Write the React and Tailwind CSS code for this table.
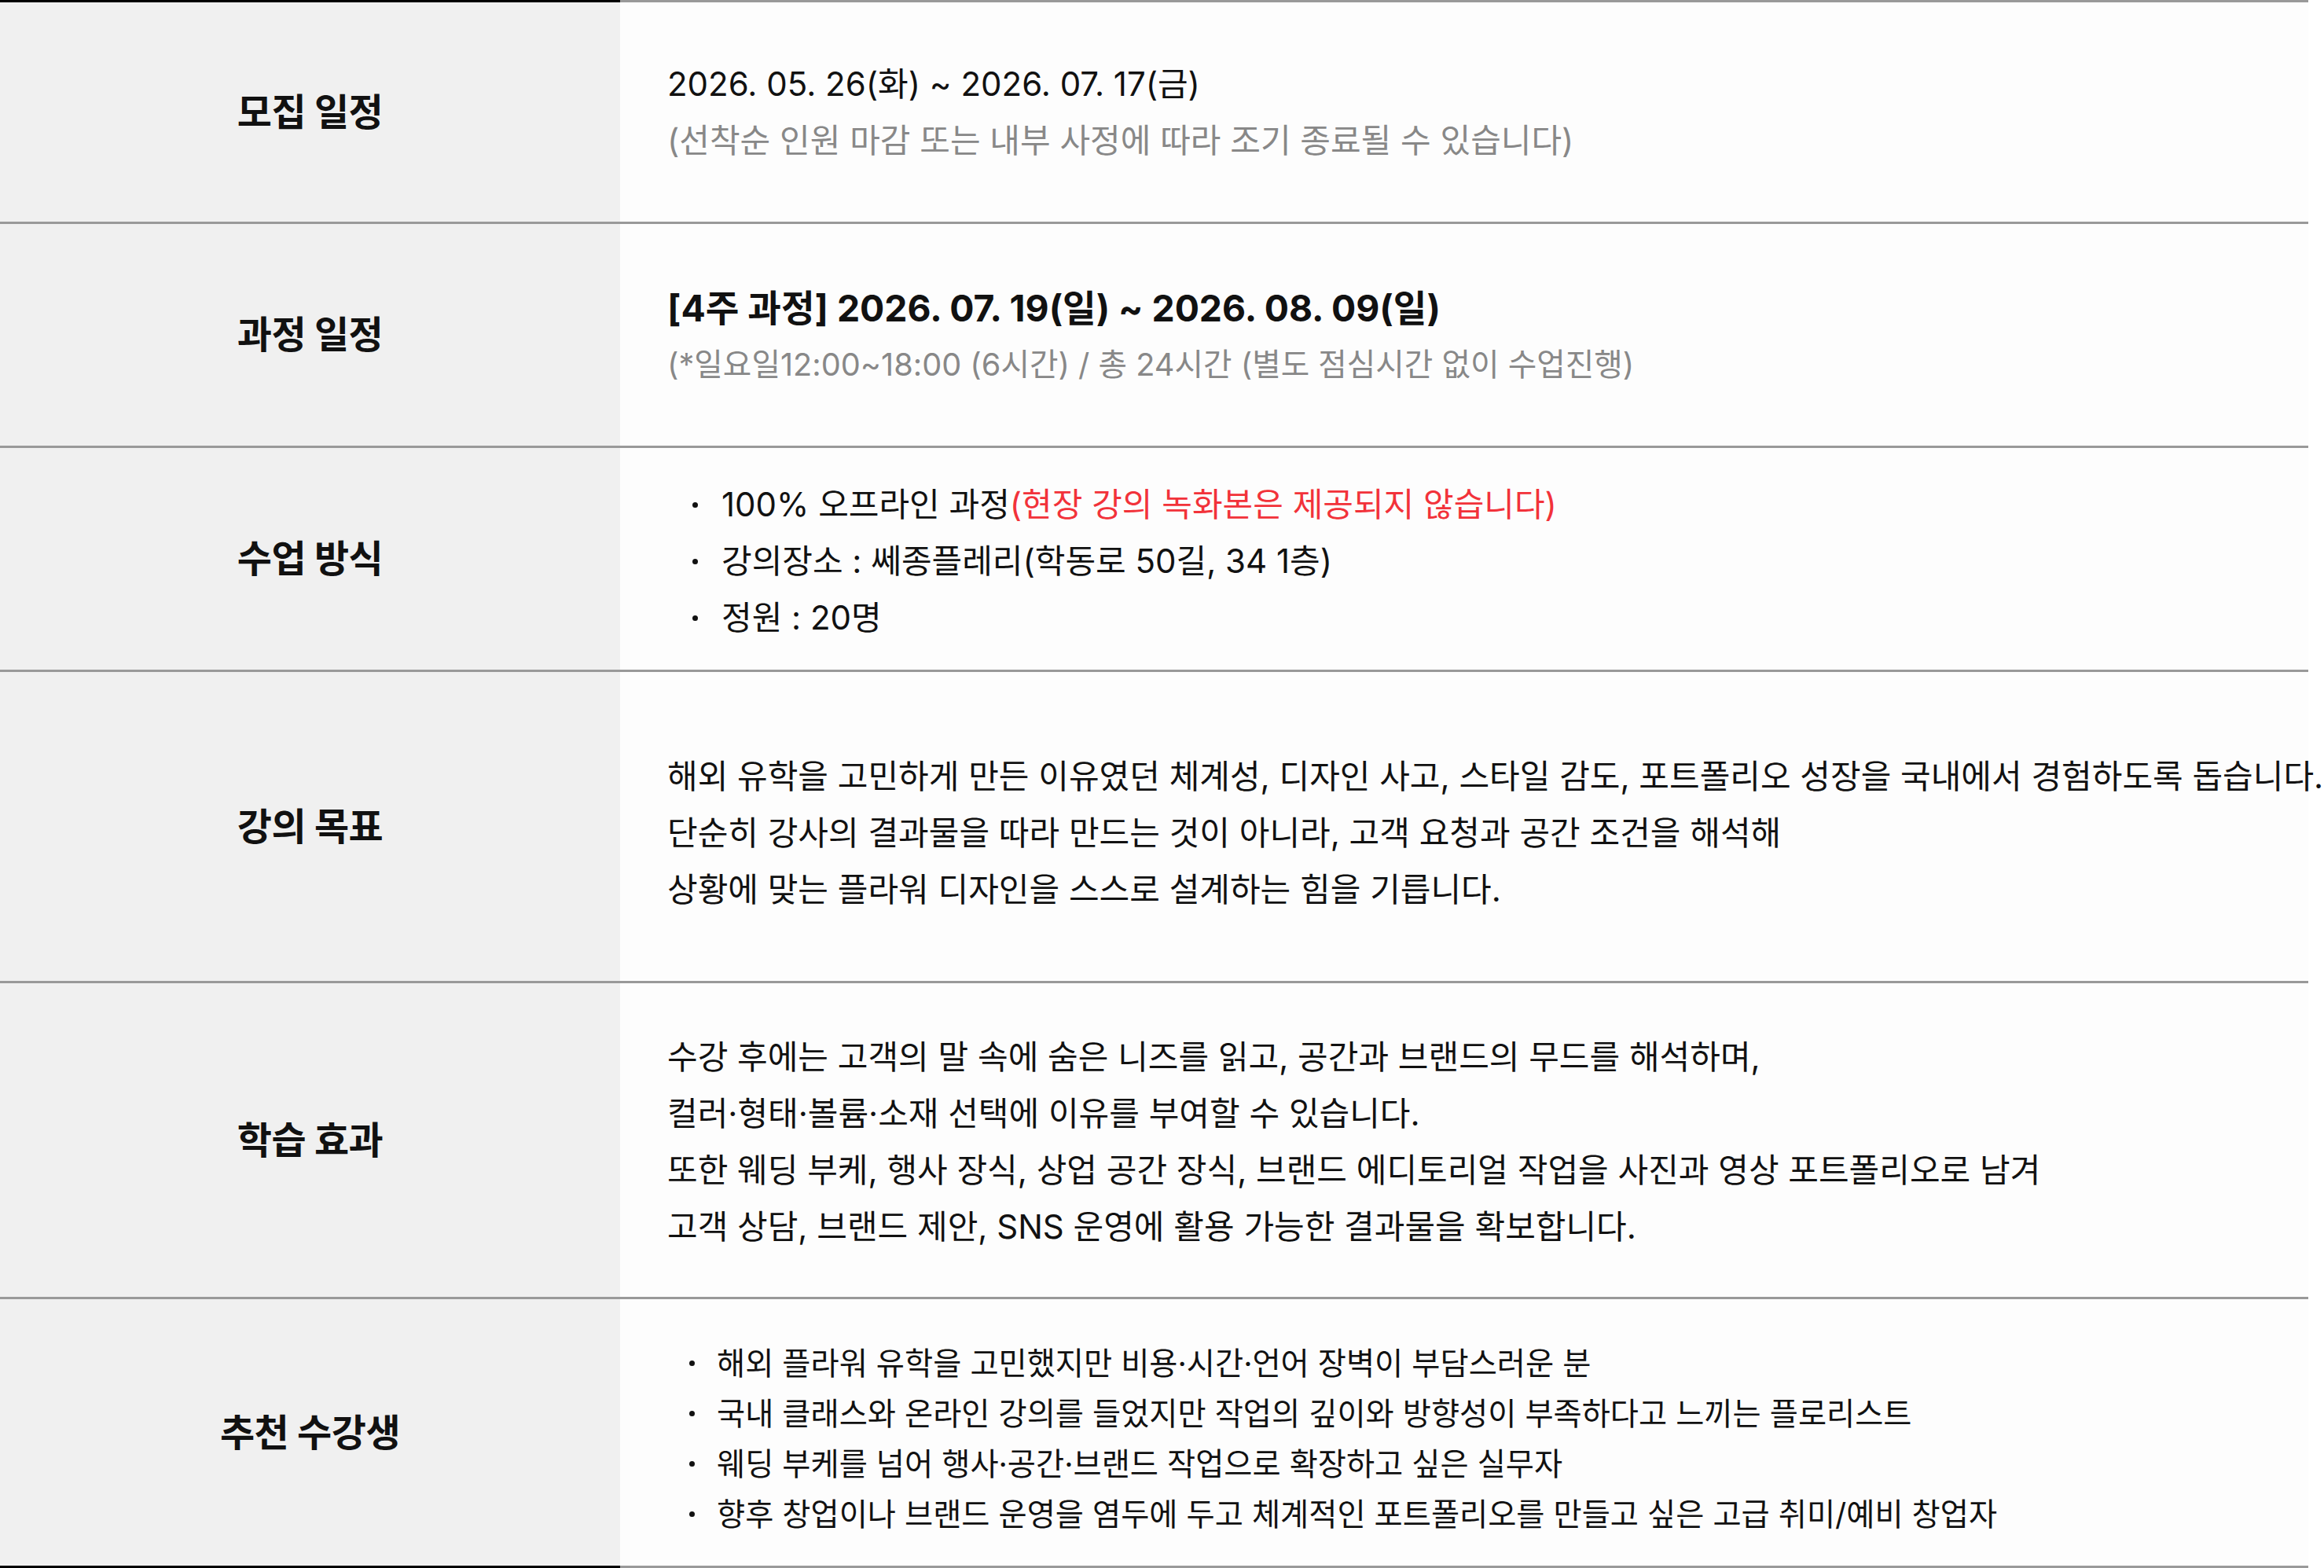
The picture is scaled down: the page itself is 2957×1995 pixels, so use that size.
import React from "react";

const FONT = "font-['Inter','Noto_Sans_CJK_KR',sans-serif]";

function Row({ label, first, last, h, children, pad = "" }) {
  return (
    <div className="flex">
      <div
        className={`w-[789px] shrink-0 bg-[#f0f0f0] flex items-center justify-center border-b-[3px] ${
          last ? "border-black" : "border-[#999]"
        } ${first ? "border-t-[3px] border-t-black" : ""} ${h}`}
      >
        <span className="text-[48px] font-bold text-[#111] tracking-[-0.5px]">{label}</span>
      </div>
      <div
        className={`flex-1 min-w-0 bg-[#fdfdfd] flex flex-col justify-center pl-[60px] border-b-[3px] border-[#999] ${
          first ? "border-t-[3px]" : ""
        } ${h} ${pad}`}
      >
        {children}
      </div>
    </div>
  );
}

function Bullet({ children, small }) {
  return (
    <div className={`flex items-center ${small ? "gap-[28px] pl-[22px]" : "gap-[30px] pl-[40px]"}`}>
      <span className="w-[7px] h-[7px] rounded-full bg-[#111] shrink-0" />
      <span className="whitespace-nowrap">{children}</span>
    </div>
  );
}

export default function App() {
  return (
    <div className={`w-[2957px] bg-white ${FONT} text-[#111]`}>
      <div className="w-[2937px]">
        <Row label="모집 일정" first h="h-[285px]">
          <div className="text-[42px] leading-[72px] whitespace-nowrap">
            <p>2026. 05. 26(화) ~ 2026. 07. 17(금)</p>
            <p className="text-[#888]">(선착순 인원 마감 또는 내부 사정에 따라 조기 종료될 수 있습니다)</p>
          </div>
        </Row>
        <Row label="과정 일정" h="h-[285px]" pad="pt-[4px]">
          <div className="leading-[72px] whitespace-nowrap">
            <p className="font-bold text-[46.3px]">[4주 과정] 2026. 07. 19(일) ~ 2026. 08. 09(일)</p>
            <p className="text-[#888] text-[39.7px]">(*일요일12:00~18:00 (6시간) / 총 24시간 (별도 점심시간 없이 수업진행)</p>
          </div>
        </Row>
        <Row label="수업 방식" h="h-[285px]" pad="pt-[6px]">
          <div className="text-[42px] leading-[72px] -ml-[60px] pl-[52px]">
            <Bullet>
              100% 오프라인 과정<span className="text-[#f2323a]">(현장 강의 녹화본은 제공되지 않습니다)</span>
            </Bullet>
            <Bullet>강의장소 : 쎄종플레리(학동로 50길, 34 1층)</Bullet>
            <Bullet>정원 : 20명</Bullet>
          </div>
        </Row>
        <Row label="강의 목표" h="h-[396px]" pad="pt-[17px]">
          <div className="text-[42px] leading-[72px] whitespace-nowrap">
            <p>해외 유학을 고민하게 만든 이유였던 체계성, 디자인 사고, 스타일 감도, 포트폴리오 성장을 국내에서 경험하도록 돕습니다.</p>
            <p>단순히 강사의 결과물을 따라 만드는 것이 아니라, 고객 요청과 공간 조건을 해석해</p>
            <p>상황에 맞는 플라워 디자인을 스스로 설계하는 힘을 기릅니다.</p>
          </div>
        </Row>
        <Row label="학습 효과" h="h-[402px]" pad="pt-[4px]">
          <div className="text-[42px] leading-[72px] whitespace-nowrap">
            <p>수강 후에는 고객의 말 속에 숨은 니즈를 읽고, 공간과 브랜드의 무드를 해석하며,</p>
            <p>컬러·형태·볼륨·소재 선택에 이유를 부여할 수 있습니다.</p>
            <p>또한 웨딩 부케, 행사 장식, 상업 공간 장식, 브랜드 에디토리얼 작업을 사진과 영상 포트폴리오로 남겨</p>
            <p>고객 상담, 브랜드 제안, SNS 운영에 활용 가능한 결과물을 확보합니다.</p>
          </div>
        </Row>
        <Row label="추천 수강생" last h="h-[342px]" pad="pt-[16px]">
          <div className="text-[39.3px] leading-[64px] -ml-[60px] pl-[66px]">
            <Bullet small>해외 플라워 유학을 고민했지만 비용·시간·언어 장벽이 부담스러운 분</Bullet>
            <Bullet small>국내 클래스와 온라인 강의를 들었지만 작업의 깊이와 방향성이 부족하다고 느끼는 플로리스트</Bullet>
            <Bullet small>웨딩 부케를 넘어 행사·공간·브랜드 작업으로 확장하고 싶은 실무자</Bullet>
            <Bullet small>향후 창업이나 브랜드 운영을 염두에 두고 체계적인 포트폴리오를 만들고 싶은 고급 취미/예비 창업자</Bullet>
          </div>
        </Row>
      </div>
    </div>
  );
}
